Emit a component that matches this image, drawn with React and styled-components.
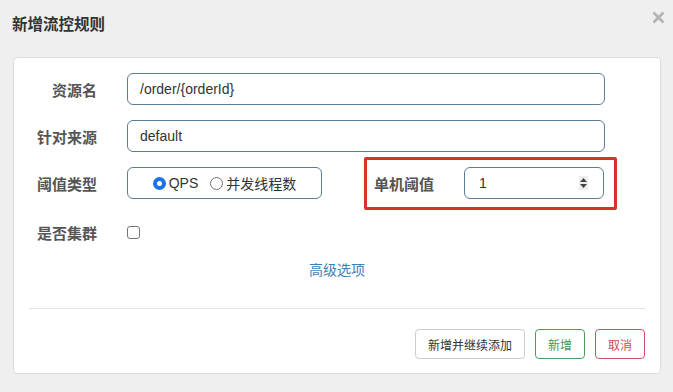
import React from 'react';
import styled, { createGlobalStyle } from 'styled-components';

const Global = createGlobalStyle`
  html, body { margin: 0; padding: 0; background: #efefef; }
  body {
    font-family: "Liberation Sans", "Noto Sans CJK SC", sans-serif;
    color: #333;
  }
  * { box-sizing: border-box; }
`;

// --- Styled Components ---

const Modal = styled.div`
  width: 673px;
  height: 392px;
  background: #efefef;
  display: flex;
  flex-direction: column;
`;

const Header = styled.div`
  position: relative;
  height: 57px;
  padding: 15px 12px 0 12px;
`;

const Title = styled.h4`
  margin: 0;
  font-size: 15.5px;
  font-weight: 700;
  line-height: 20px;
  color: #333;
`;

const Close = styled.span`
  position: absolute;
  top: 11px;
  right: 8px;
  width: 13px;
  height: 13px;
  display: flex;
`;

const Panel = styled.div`
  margin: 0 12px 0 13px;
  background: #fff;
  border: 1px solid #dcdcdc;
  border-radius: 4px;
  padding: 15px 15px 14px 0;
  display: flex;
  flex-direction: column;
`;

const Row = styled.div`
  display: flex;
  align-items: center;
  height: 32px;
  margin-bottom: ${({ gap }) => gap ?? 15}px;
`;

const Label = styled.label`
  width: ${({ w }) => w ?? '83px'};
  flex: none;
  text-align: right;
  font-size: 15px;
  font-weight: 700;
  color: #555;
  margin-right: 30px;
`;

const Input = styled.div`
  width: ${({ w }) => w ? `${w}px` : '478px'};
  height: 32px;
  border: 1px solid #5d7d96;
  border-radius: 6px;
  padding: 0 12px;
  display: flex;
  align-items: center;
  font-size: 14px;
  color: #333;
  background: #fff;
`;

const RadioBox = styled.div`
  width: 195px;
  height: 32px;
  border: 1px solid #5d7d96;
  border-radius: 6px;
  display: flex;
  align-items: center;
  justify-content: center;
  font-size: 14px;
  color: #333;
`;

const RadioItem = styled.span`
  display: inline-flex;
  align-items: center;
  gap: 3px;
  margin-right: ${({ mr }) => mr ?? 0}px;
`;

const Radio = styled.span`
  width: 13px;
  height: 13px;
  border-radius: 50%;
  border: ${({ checked }) => checked ? '4px solid #1a73e8' : '1px solid #767676'};
  background: #fff;
  box-shadow: ${({ checked }) => checked ? 'inset 0 0 0 1px #fff' : 'none'};
  display: inline-block;
`;

const Highlight = styled.div`
  margin-left: 42px;
  width: 253px;
  height: 53px;
  border: 3px solid #d9302a;
  border-radius: 2px;
  display: flex;
  align-items: center;
  padding-left: 7px;
`;

const Spinner = styled.span`
  margin-left: auto;
  margin-right: 3px;
  width: 9px;
  height: 14px;
  background: #ededed;
  display: flex;
  flex-direction: column;
  align-items: center;
  justify-content: center;
  gap: 2px;
`;

const Check = styled.span`
  width: 13px;
  height: 13px;
  border: 1px solid #767676;
  border-radius: 3px;
  background: #fff;
  display: inline-block;
`;

const Advanced = styled.a`
  align-self: center;
  margin: 12px 0 0 15px;
  font-size: 14px;
  color: #3d7fb8;
  text-decoration: none;
  line-height: 20px;
`;

const Divider = styled.div`
  height: 1px;
  background: #e3e3e3;
  margin: 28px 0 0 15px;
`;

const Footer = styled.div`
  display: flex;
  justify-content: flex-end;
  gap: 10px;
  margin-top: 20px;
`;

const Button = styled.button`
  height: 30px;
  padding: 0 12px;
  background: #fff;
  border: 1px solid ${({ tone }) => tone === 'green' ? '#4a9d5b' : tone === 'red' ? '#c9505e' : '#cccccc'};
  color: ${({ tone }) => tone === 'green' ? '#3d9a4e' : tone === 'red' ? '#d0485a' : '#333'};
  border-radius: 4px;
  font-family: "Liberation Sans", "Noto Sans CJK SC", sans-serif;
  font-size: 12px;
`;

const Arrow = ({ up }) => (
  <svg width="7" height="4" viewBox="0 0 7 4">
    <path d={up ? 'M0 4 L3.5 0 L7 4 Z' : 'M0 0 L3.5 4 L7 0 Z'} fill="#444" />
  </svg>
);

const CloseIcon = () => (
  <svg width="13" height="13" viewBox="0 0 13 13">
    <path d="M1.5 1.5 L11.5 11.5 M11.5 1.5 L1.5 11.5" stroke="#b3b3b3" strokeWidth="2.6" strokeLinecap="butt" />
  </svg>
);

// --- Component ---

export default function App() {
  return (
    <Modal>
      <Global />
      <Header>
        <Title>新增流控规则</Title>
        <Close><CloseIcon /></Close>
      </Header>
      <Panel>
        <Row>
          <Label>资源名</Label>
          <Input>/order/{'{'}orderId{'}'}</Input>
        </Row>
        <Row>
          <Label>针对来源</Label>
          <Input>default</Input>
        </Row>
        <Row gap={17}>
          <Label>阈值类型</Label>
          <RadioBox>
            <RadioItem mr={12}><Radio checked />QPS</RadioItem>
            <RadioItem><Radio />并发线程数</RadioItem>
          </RadioBox>
          <Highlight>
            <Label as="span" w="auto">单机阈值</Label>
            <Input w={140}>
              <span style={{ paddingLeft: 2 }}>1</span>
              <Spinner><Arrow up /><Arrow /></Spinner>
            </Input>
          </Highlight>
        </Row>
        <Row gap={0}>
          <Label>是否集群</Label>
          <Check />
        </Row>
        <Advanced href="#">高级选项</Advanced>
        <Divider />
        <Footer>
          <Button>新增并继续添加</Button>
          <Button tone="green">新增</Button>
          <Button tone="red">取消</Button>
        </Footer>
      </Panel>
    </Modal>
  );
}
